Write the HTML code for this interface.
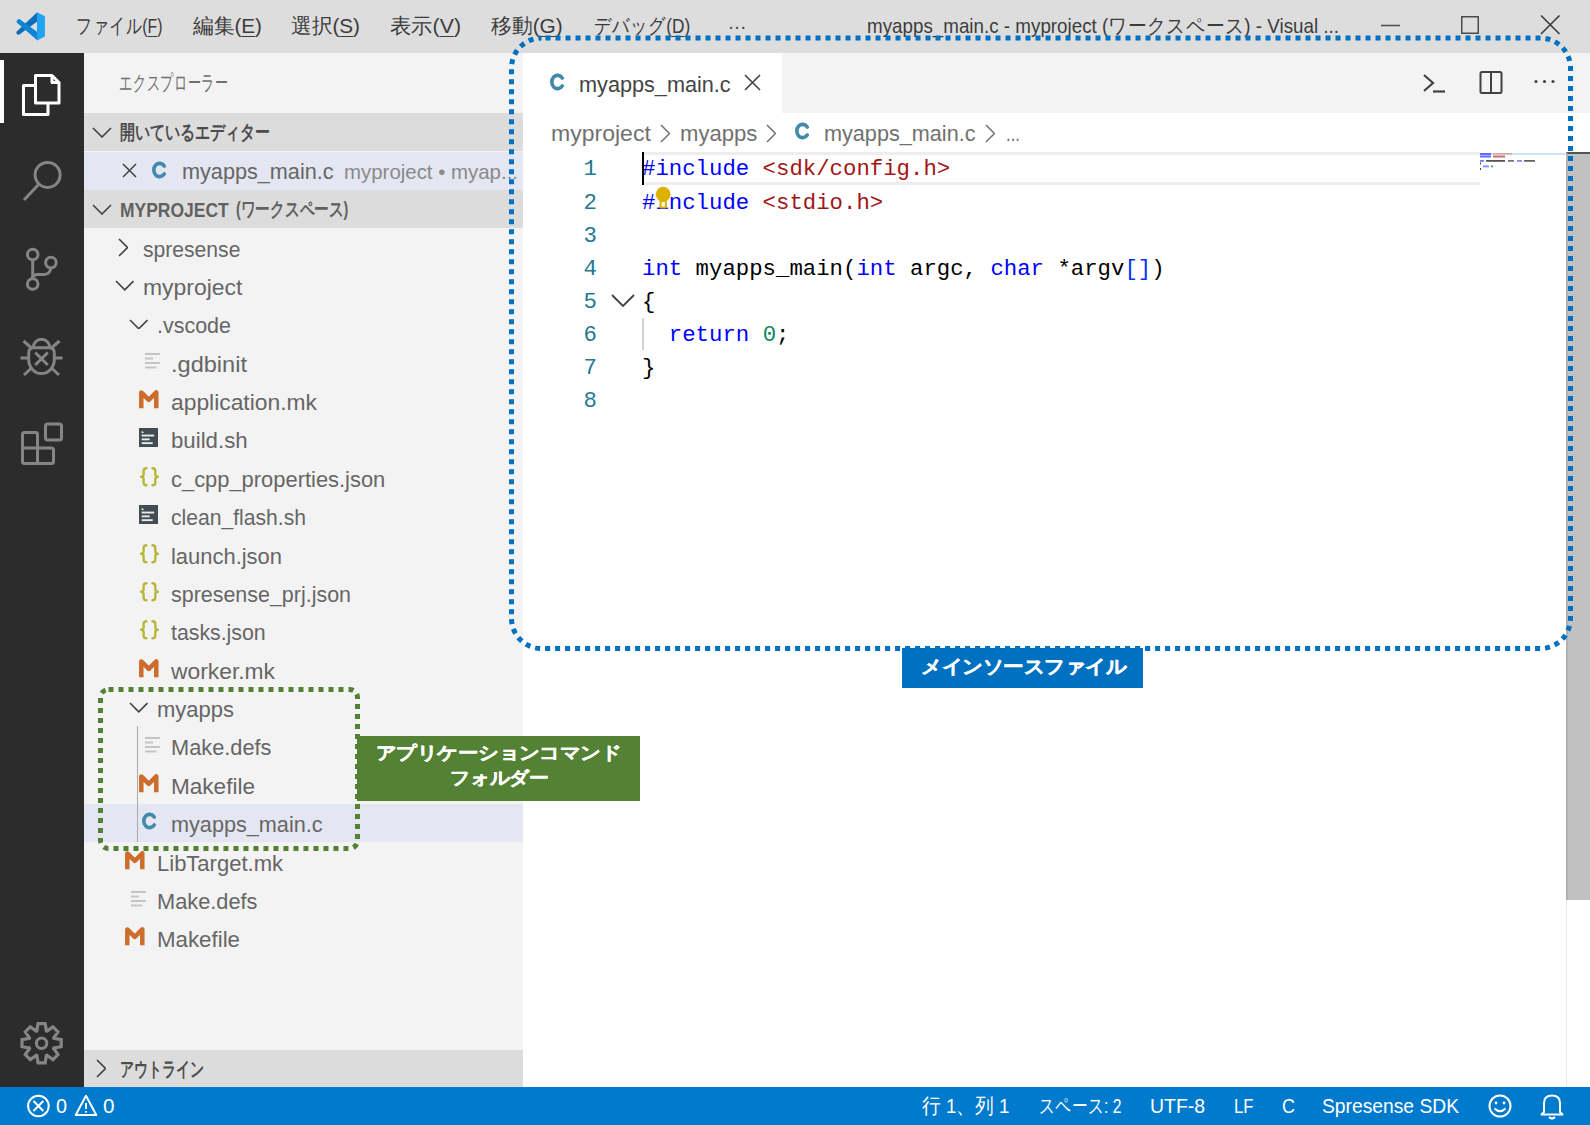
<!DOCTYPE html>
<html><head><meta charset="utf-8"><style>
*{margin:0;padding:0;box-sizing:border-box}
html,body{width:1590px;height:1125px;overflow:hidden;background:#fff;font-family:"Liberation Sans",sans-serif}
.abs{position:absolute}
.t{position:absolute;white-space:nowrap}
.menu{font-size:21px;color:#3c3c3c;line-height:30px}
.menu u{text-decoration:underline;text-underline-offset:3px;text-decoration-thickness:1px}
.hdr{position:absolute;left:84px;width:438.5px;height:38.3px;background:#dcdcdc}
.hdrt{font-size:19.5px;font-weight:bold;color:#616161;line-height:38px}
.row{position:absolute;left:84px;width:438.5px;height:38.27px}
.row.sel{background:#e4e6f1}
.ic{position:absolute}
.lbl{font-size:21.3px;color:#666666;line-height:36px}
.jsonic{font-family:"Liberation Mono",monospace;font-size:21px;font-weight:bold;color:#b7b73b;line-height:26px;letter-spacing:-2px}
.cic{font-size:23px;font-weight:bold;color:#519aba;line-height:26px}
.code{position:absolute;left:642px;font-family:"Liberation Mono",monospace;font-size:22.33px;line-height:33.14px;color:#000;white-space:pre}
.ln{position:absolute;left:560px;width:37px;text-align:right;font-family:"Liberation Mono",monospace;font-size:22.33px;line-height:33.14px;color:#237893}
.kw{color:#0000ff}.str{color:#a31515}.num{color:#09885a}.br{color:#0431fa}
.st{line-height:38px;font-size:21px;color:#fff}
</style></head><body>
<div class="abs" style="left:0;top:0;width:1590px;height:52.5px;background:#dddddd"></div>
<svg class="abs" style="left:10px;top:8px" width="40" height="38" viewBox="10 8 40 38">
  <path d="M37.2 12.3 L38 21 L19.4 34.4 Q18 35.2 17 34 L16.4 33 Q16 32 17 31.2 Z" fill="#0a6ebd"/>
  <path d="M19.4 19 L38 32.6 L37.5 40.6 L17 22.8 Q16 21.8 17 20.6 L17.6 19.8 Q18.4 18.6 19.4 19 Z" fill="#0b85d5"/>
  <path d="M37 12.2 L44.9 16.3 V36.6 L37 40.4 Z" fill="#20a3f0"/>
</svg>
<div class="t menu" style="left:75.5px;top:11px;"><span style="display:inline-block;transform:scaleX(0.7533);transform-origin:0 0">ファイル(<u>F</u>)</span></div>
<div class="t menu" style="left:192.7px;top:11px;"><span style="display:inline-block;transform:scaleX(0.9855);transform-origin:0 0">編集(<u>E</u>)</span></div>
<div class="t menu" style="left:291px;top:11px;"><span style="display:inline-block;transform:scaleX(0.9855);transform-origin:0 0">選択(<u>S</u>)</span></div>
<div class="t menu" style="left:390px;top:11px;"><span style="display:inline-block;transform:scaleX(1.0141);transform-origin:0 0">表示(<u>V</u>)</span></div>
<div class="t menu" style="left:491.3px;top:11px;"><span style="display:inline-block;transform:scaleX(0.9911);transform-origin:0 0">移動(<u>G</u>)</span></div>
<div class="t menu" style="left:593.7px;top:11px;"><span style="display:inline-block;transform:scaleX(0.8219);transform-origin:0 0">デバッグ(<u>D</u>)</span></div>
<div class="t menu" style="left:727.8px;top:11px;"><span style="display:inline-block;transform:scaleX(0.8673);transform-origin:0 0">···</span></div>
<div class="t menu" style="left:867px;top:11px;"><span style="display:inline-block;transform:scaleX(0.8950);transform-origin:0 0">myapps_main.c - myproject (ワークスペース) - Visual ...</span></div>
<svg class="abs" style="left:1375px;top:10px" width="190" height="30" viewBox="1375 10 190 30">
  <path d="M1381 25.5 H1400" stroke="#4a4a4a" stroke-width="1.5"/>
  <rect x="1461.75" y="16.75" width="16.5" height="16.5" fill="none" stroke="#4a4a4a" stroke-width="1.5"/>
  <path d="M1541 15.5 L1559.5 34 M1559.5 15.5 L1541 34" stroke="#3a3a3a" stroke-width="1.6"/>
</svg>
<div class="abs" style="left:0;top:52.5px;width:84px;height:1034.5px;background:#2c2c2c"></div>
<div class="abs" style="left:0;top:60px;width:4px;height:63px;background:#fff"></div>
<svg class="abs" style="left:0;top:52px" width="84" height="1035" viewBox="0 52 84 1035">
 <g fill="none" stroke="#ffffff" stroke-width="3" stroke-linejoin="round">
  <path d="M35.5 75.5 H52 L59 82.5 V103 H35.5 Z"/>
  <path d="M52 75.5 V82.5 H59"/>
  <path d="M35.5 85.5 H23.5 V114.5 H48 V103"/>
 </g>
 <g fill="none" stroke="#858585" stroke-width="3">
  <circle cx="47.6" cy="174.9" r="12.5"/>
  <path d="M38.5 184.5 L24 200"/>
  <circle cx="32.7" cy="254.5" r="5.3"/>
  <circle cx="50.9" cy="262.6" r="5.3"/>
  <circle cx="32.7" cy="284" r="5.3"/>
  <path d="M32.7 259.8 V278.7"/>
  <path d="M50.9 267.9 Q50 274.4 44 274.4 H38 Q33 274.4 32.7 278"/>
  <path d="M33.2 347.8 A8.3 8.6 0 0 1 49.8 347.8"/>
  <path d="M28.7 353 Q28.7 347.8 34 347.8 H49 Q54.3 347.8 54.3 353 V359.5 A12.8 14 0 0 1 28.7 359.5 Z"/>
  <path d="M35.2 352.5 L47.8 365 M47.8 352.5 L35.2 365"/>
  <path d="M20.5 358 H28 M55 358 H62.5"/>
  <path d="M23.5 341 L31 347.5 M59.5 341 L52 347.5"/>
  <path d="M24 375 L31.5 368 M59 375 L51.5 368"/>
  <path d="M24.5 432.5 H35.5 Q37.5 432.5 37.5 434.5 V448 H51.5 Q53.5 448 53.5 450 V461.5 Q53.5 463.5 51.5 463.5 H24.5 Q22.5 463.5 22.5 461.5 V434.5 Q22.5 432.5 24.5 432.5 Z M22.5 448 H37.5 V463.5"/>
  <rect x="45.5" y="424" width="16" height="16" rx="2"/>
  <circle cx="41.6" cy="1043.2" r="5.2"/>
 </g>
 <path fill="none" stroke="#858585" stroke-width="3.2" d="M36.83 1030.89 L38.04 1023.62 L45.16 1023.62 L46.37 1030.89 L46.93 1031.12 L52.92 1026.84 L57.96 1031.88 L53.68 1037.87 L53.91 1038.43 L61.18 1039.64 L61.18 1046.76 L53.91 1047.97 L53.68 1048.53 L57.96 1054.52 L52.92 1059.56 L46.93 1055.28 L46.37 1055.51 L45.16 1062.78 L38.04 1062.78 L36.83 1055.51 L36.27 1055.28 L30.28 1059.56 L25.24 1054.52 L29.52 1048.53 L29.29 1047.97 L22.02 1046.76 L22.02 1039.64 L29.29 1038.43 L29.52 1037.87 L25.24 1031.88 L30.28 1026.84 L36.27 1031.12 Z"/>
</svg>
<div class="abs" style="left:84px;top:52.5px;width:438.5px;height:1034.5px;background:#f3f3f3"></div>
<div class="t" style="left:119px;top:67.5px;font-size:20.5px;color:#6f6f6f;line-height:30px"><span style="display:inline-block;transform:scaleX(0.6264);transform-origin:0 0">エクスプローラー</span></div>
<div class="hdr" style="top:113px"></div>
<svg class="abs" style="left:91.5px;top:126.69999999999999px" width="20" height="11.0" viewBox="-1 -1 20 11.0"><path d="M0 0 L9.0 9.0 L18 0" fill="none" stroke="#424242" stroke-width="1.6"/></svg>
<div class="t hdrt" style="left:120px;top:113px;font-size:19.5px;color:#4d4d4d"><span style="display:inline-block;transform:scaleX(0.7500);transform-origin:0 0">開いているエディター</span></div>
<div class="row sel" style="top:151.6px"></div>
<svg class="abs" style="left:122px;top:163px" width="15" height="15" viewBox="0 0 15 15"><path d="M1 1 L14 14 M14 1 L1 14" stroke="#424242" stroke-width="1.5"/></svg>
<svg class="abs" style="left:149.3px;top:159.9px" width="20" height="20" viewBox="149.3 159.9 20 20"><path d="M164.54 165.90 A5.8 6.65 0 1 0 164.54 173.90" fill="none" stroke="#4289aa" stroke-width="3.6" stroke-linecap="round"/></svg>
<div class="t lbl" style="left:181.7px;top:154px;"><span style="display:inline-block;transform:scaleX(1.0165);transform-origin:0 0">myapps_main.c</span></div>
<div class="t lbl" style="left:344.3px;top:154px;font-size:21px;color:#8a8a8a"><span style="display:inline-block;transform:scaleX(0.9726);transform-origin:0 0">myproject • myap...</span></div>
<div class="hdr" style="top:189.8px"></div>
<svg class="abs" style="left:91.5px;top:203.5px" width="20" height="11.0" viewBox="-1 -1 20 11.0"><path d="M0 0 L9.0 9.0 L18 0" fill="none" stroke="#424242" stroke-width="1.6"/></svg>
<div class="t hdrt" style="left:120px;top:191.3px;font-size:20.3px"><span style="display:inline-block;transform:scaleX(0.8612);transform-origin:0 0">MYPROJECT</span></div>
<div class="t hdrt" style="left:236px;top:190px;"><span style="display:inline-block;transform:scaleX(0.7346);transform-origin:0 0">(ワークスペース)</span></div>
<svg class="abs" style="left:117.5px;top:237.785px" width="10.5" height="19" viewBox="-1 -1 10.5 19"><path d="M0 0 L8.5 8.5 L0 17" fill="none" stroke="#424242" stroke-width="1.6"/></svg>
<div class="t lbl" style="left:143.3px;top:231.6px;"><span style="display:inline-block;transform:scaleX(0.9912);transform-origin:0 0">spresense</span></div>
<svg class="abs" style="left:114.5px;top:280.28px" width="19.5" height="10.75" viewBox="-1 -1 19.5 10.75"><path d="M0 0 L8.75 8.75 L17.5 0" fill="none" stroke="#424242" stroke-width="1.6"/></svg>
<div class="t lbl" style="left:143.3px;top:269.97px;"><span style="display:inline-block;transform:scaleX(1.0768);transform-origin:0 0">myproject</span></div>
<svg class="abs" style="left:128.5px;top:318.65px" width="19.5" height="10.75" viewBox="-1 -1 19.5 10.75"><path d="M0 0 L8.75 8.75 L17.5 0" fill="none" stroke="#424242" stroke-width="1.6"/></svg>
<div class="t lbl" style="left:157.3px;top:308.34px;"><span style="display:inline-block;transform:scaleX(1.0081);transform-origin:0 0">.vscode</span></div>
<svg class="abs" style="left:145.2px;top:353.495px" width="16" height="16" viewBox="0 0 16 16"><g stroke="#c4c6c6" stroke-width="2"><path d="M0 1 H15"/><path d="M0 5.5 H8"/><path d="M0 10 H15"/><path d="M0 14.5 H11.5"/></g></svg>
<div class="t lbl" style="left:171px;top:346.71px;"><span style="display:inline-block;transform:scaleX(1.1065);transform-origin:0 0">.gdbinit</span></div>
<svg class="abs" style="left:139.3px;top:390.315px" width="20" height="19" viewBox="0 0 20 19"><path d="M2.3 18.3 V2.4 L9.8 9.9 L17.3 2.4 V18.3" fill="none" stroke="#cc6d2e" stroke-width="4.5" stroke-linejoin="round"/></svg>
<div class="t lbl" style="left:171px;top:385.08px;"><span style="display:inline-block;transform:scaleX(1.0724);transform-origin:0 0">application.mk</span></div>
<svg class="abs" style="left:139.3px;top:428.135px" width="19" height="19" viewBox="0 0 19 19"><rect x="0" y="0" width="19" height="19" fill="#414d52"/><g fill="#e8eaea"><path d="M2.7 3 L5.2 4.2 L2.7 5.4 Z"/><rect x="2.7" y="6.6" width="12.5" height="1.9"/><rect x="2.7" y="10.4" width="8" height="1.9"/><rect x="2.7" y="14.2" width="11" height="1.9"/></g></svg>
<div class="t lbl" style="left:171px;top:423.45px;"><span style="display:inline-block;transform:scaleX(1.0435);transform-origin:0 0">build.sh</span></div>
<svg class="abs" style="left:139.7px;top:467.00499999999994px" width="19" height="20" viewBox="0 0 19 20"><g fill="none" stroke="#b7b73b" stroke-width="2.4" stroke-linecap="round" stroke-linejoin="round"><path d="M6.4 1.3 Q3.6 1.3 3.6 4 V7.2 Q3.6 9.7 0.9 9.7 Q3.6 9.7 3.6 12.2 V15.4 Q3.6 18.2 6.4 18.2"/><path d="M12.5 1.3 Q15.3 1.3 15.3 4 V7.2 Q15.3 9.7 18 9.7 Q15.3 9.7 15.3 12.2 V15.4 Q15.3 18.2 12.5 18.2"/></g></svg>
<div class="t lbl" style="left:171px;top:461.82px;"><span style="display:inline-block;transform:scaleX(1.0284);transform-origin:0 0">c_cpp_properties.json</span></div>
<svg class="abs" style="left:139.3px;top:504.8749999999999px" width="19" height="19" viewBox="0 0 19 19"><rect x="0" y="0" width="19" height="19" fill="#414d52"/><g fill="#e8eaea"><path d="M2.7 3 L5.2 4.2 L2.7 5.4 Z"/><rect x="2.7" y="6.6" width="12.5" height="1.9"/><rect x="2.7" y="10.4" width="8" height="1.9"/><rect x="2.7" y="14.2" width="11" height="1.9"/></g></svg>
<div class="t lbl" style="left:171px;top:500.19px;"><span style="display:inline-block;transform:scaleX(0.9915);transform-origin:0 0">clean_flash.sh</span></div>
<svg class="abs" style="left:139.7px;top:543.7449999999999px" width="19" height="20" viewBox="0 0 19 20"><g fill="none" stroke="#b7b73b" stroke-width="2.4" stroke-linecap="round" stroke-linejoin="round"><path d="M6.4 1.3 Q3.6 1.3 3.6 4 V7.2 Q3.6 9.7 0.9 9.7 Q3.6 9.7 3.6 12.2 V15.4 Q3.6 18.2 6.4 18.2"/><path d="M12.5 1.3 Q15.3 1.3 15.3 4 V7.2 Q15.3 9.7 18 9.7 Q15.3 9.7 15.3 12.2 V15.4 Q15.3 18.2 12.5 18.2"/></g></svg>
<div class="t lbl" style="left:171px;top:538.56px;"><span style="display:inline-block;transform:scaleX(1.0302);transform-origin:0 0">launch.json</span></div>
<svg class="abs" style="left:139.7px;top:582.1149999999999px" width="19" height="20" viewBox="0 0 19 20"><g fill="none" stroke="#b7b73b" stroke-width="2.4" stroke-linecap="round" stroke-linejoin="round"><path d="M6.4 1.3 Q3.6 1.3 3.6 4 V7.2 Q3.6 9.7 0.9 9.7 Q3.6 9.7 3.6 12.2 V15.4 Q3.6 18.2 6.4 18.2"/><path d="M12.5 1.3 Q15.3 1.3 15.3 4 V7.2 Q15.3 9.7 18 9.7 Q15.3 9.7 15.3 12.2 V15.4 Q15.3 18.2 12.5 18.2"/></g></svg>
<div class="t lbl" style="left:171px;top:576.93px;"><span style="display:inline-block;transform:scaleX(1.0069);transform-origin:0 0">spresense_prj.json</span></div>
<svg class="abs" style="left:139.7px;top:620.4849999999999px" width="19" height="20" viewBox="0 0 19 20"><g fill="none" stroke="#b7b73b" stroke-width="2.4" stroke-linecap="round" stroke-linejoin="round"><path d="M6.4 1.3 Q3.6 1.3 3.6 4 V7.2 Q3.6 9.7 0.9 9.7 Q3.6 9.7 3.6 12.2 V15.4 Q3.6 18.2 6.4 18.2"/><path d="M12.5 1.3 Q15.3 1.3 15.3 4 V7.2 Q15.3 9.7 18 9.7 Q15.3 9.7 15.3 12.2 V15.4 Q15.3 18.2 12.5 18.2"/></g></svg>
<div class="t lbl" style="left:171px;top:615.3px;"><span style="display:inline-block;transform:scaleX(1.0000);transform-origin:0 0">tasks.json</span></div>
<svg class="abs" style="left:139.3px;top:658.905px" width="20" height="19" viewBox="0 0 20 19"><path d="M2.3 18.3 V2.4 L9.8 9.9 L17.3 2.4 V18.3" fill="none" stroke="#cc6d2e" stroke-width="4.5" stroke-linejoin="round"/></svg>
<div class="t lbl" style="left:171px;top:653.67px;"><span style="display:inline-block;transform:scaleX(1.0716);transform-origin:0 0">worker.mk</span></div>
<svg class="abs" style="left:128.5px;top:702.3499999999999px" width="19.5" height="10.75" viewBox="-1 -1 19.5 10.75"><path d="M0 0 L8.75 8.75 L17.5 0" fill="none" stroke="#424242" stroke-width="1.6"/></svg>
<div class="t lbl" style="left:157.3px;top:692.04px;"><span style="display:inline-block;transform:scaleX(1.0325);transform-origin:0 0">myapps</span></div>
<svg class="abs" style="left:145.2px;top:737.1949999999998px" width="16" height="16" viewBox="0 0 16 16"><g stroke="#c4c6c6" stroke-width="2"><path d="M0 1 H15"/><path d="M0 5.5 H8"/><path d="M0 10 H15"/><path d="M0 14.5 H11.5"/></g></svg>
<div class="t lbl" style="left:171px;top:730.41px;"><span style="display:inline-block;transform:scaleX(1.0229);transform-origin:0 0">Make.defs</span></div>
<svg class="abs" style="left:139.3px;top:774.015px" width="20" height="19" viewBox="0 0 20 19"><path d="M2.3 18.3 V2.4 L9.8 9.9 L17.3 2.4 V18.3" fill="none" stroke="#cc6d2e" stroke-width="4.5" stroke-linejoin="round"/></svg>
<div class="t lbl" style="left:171px;top:768.78px;"><span style="display:inline-block;transform:scaleX(1.0591);transform-origin:0 0">Makefile</span></div>
<div class="row sel" style="top:803.65px"></div>
<svg class="abs" style="left:139.2px;top:811.035px" width="20" height="20" viewBox="139.2 811.035 20 20"><path d="M154.44 817.03 A5.8 6.65 0 1 0 154.44 825.03" fill="none" stroke="#4289aa" stroke-width="3.6" stroke-linecap="round"/></svg>
<div class="t lbl" style="left:171px;top:807.15px;"><span style="display:inline-block;transform:scaleX(1.0165);transform-origin:0 0">myapps_main.c</span></div>
<svg class="abs" style="left:125.30000000000001px;top:850.755px" width="20" height="19" viewBox="0 0 20 19"><path d="M2.3 18.3 V2.4 L9.8 9.9 L17.3 2.4 V18.3" fill="none" stroke="#cc6d2e" stroke-width="4.5" stroke-linejoin="round"/></svg>
<div class="t lbl" style="left:157px;top:845.52px;"><span style="display:inline-block;transform:scaleX(1.0334);transform-origin:0 0">LibTarget.mk</span></div>
<svg class="abs" style="left:131.2px;top:890.6749999999998px" width="16" height="16" viewBox="0 0 16 16"><g stroke="#c4c6c6" stroke-width="2"><path d="M0 1 H15"/><path d="M0 5.5 H8"/><path d="M0 10 H15"/><path d="M0 14.5 H11.5"/></g></svg>
<div class="t lbl" style="left:157px;top:883.89px;"><span style="display:inline-block;transform:scaleX(1.0229);transform-origin:0 0">Make.defs</span></div>
<svg class="abs" style="left:125.30000000000001px;top:927.495px" width="20" height="19" viewBox="0 0 20 19"><path d="M2.3 18.3 V2.4 L9.8 9.9 L17.3 2.4 V18.3" fill="none" stroke="#cc6d2e" stroke-width="4.5" stroke-linejoin="round"/></svg>
<div class="t lbl" style="left:157px;top:922.26px;"><span style="display:inline-block;transform:scaleX(1.0465);transform-origin:0 0">Makefile</span></div>
<div class="abs" style="left:137px;top:726px;width:1.2px;height:116px;background:#a9a9a9"></div>
<div class="hdr" style="top:1049.5px"></div>
<svg class="abs" style="left:95.5px;top:1059.0px" width="10.5" height="19" viewBox="-1 -1 10.5 19"><path d="M0 0 L8.5 8.5 L0 17" fill="none" stroke="#424242" stroke-width="1.6"/></svg>
<div class="t hdrt" style="left:119.5px;top:1050px;font-size:19.5px;color:#4d4d4d"><span style="display:inline-block;transform:scaleX(0.7000);transform-origin:0 0">アウトライン</span></div>
<div class="abs" style="left:522.5px;top:52.5px;width:1067.5px;height:60.2px;background:#f3f3f3"></div>
<div class="abs" style="left:522.5px;top:52.5px;width:259px;height:60.2px;background:#fff"></div>
<svg class="abs" style="left:547px;top:72.3px" width="20" height="20" viewBox="547 72.3 20 20"><path d="M562.24 78.30 A5.8 6.65 0 1 0 562.24 86.30" fill="none" stroke="#4289aa" stroke-width="3.6" stroke-linecap="round"/></svg>
<div class="t" style="left:579px;top:67px;font-size:21.3px;color:#444444;line-height:36px"><span style="display:inline-block;transform:scaleX(1.0172);transform-origin:0 0">myapps_main.c</span></div>
<svg class="abs" style="left:744px;top:74px" width="17" height="17" viewBox="0 0 17 17"><path d="M1 1 L16 16 M16 1 L1 16" stroke="#424242" stroke-width="1.6"/></svg>
<svg class="abs" style="left:1418px;top:66px" width="145" height="34" viewBox="1418 66 145 34">
 <path d="M1424 75 L1433 83 L1424 91" fill="none" stroke="#424242" stroke-width="2.2"/>
 <path d="M1433 91.5 H1445" stroke="#424242" stroke-width="2.2"/>
 <rect x="1480.5" y="72" width="21" height="21" rx="1.5" fill="none" stroke="#424242" stroke-width="2"/>
 <path d="M1491 72 V93" stroke="#424242" stroke-width="2"/>
 <circle cx="1536" cy="81.5" r="1.6" fill="#424242"/>
 <circle cx="1544.5" cy="81.5" r="1.6" fill="#424242"/>
 <circle cx="1553" cy="81.5" r="1.6" fill="#424242"/>
</svg>
<div class="t" style="left:551px;top:116px;font-size:21.3px;color:#717171;line-height:36px"><span style="display:inline-block;transform:scaleX(1.0811);transform-origin:0 0">myproject</span></div>
<svg class="abs" style="left:659.5px;top:123.5px" width="10.5" height="19" viewBox="-1 -1 10.5 19"><path d="M0 0 L8.5 8.5 L0 17" fill="none" stroke="#717171" stroke-width="1.5"/></svg>
<div class="t" style="left:679.6px;top:116px;font-size:21.3px;color:#717171;line-height:36px"><span style="display:inline-block;transform:scaleX(1.0378);transform-origin:0 0">myapps</span></div>
<svg class="abs" style="left:765.5px;top:123.5px" width="10.5" height="19" viewBox="-1 -1 10.5 19"><path d="M0 0 L8.5 8.5 L0 17" fill="none" stroke="#717171" stroke-width="1.5"/></svg>
<svg class="abs" style="left:792.1px;top:121.1px" width="20" height="20" viewBox="792.1 121.1 20 20"><path d="M807.34 127.10 A5.8 6.65 0 1 0 807.34 135.10" fill="none" stroke="#4289aa" stroke-width="3.6" stroke-linecap="round"/></svg>
<div class="t" style="left:824px;top:116px;font-size:21.3px;color:#717171;line-height:36px"><span style="display:inline-block;transform:scaleX(1.0158);transform-origin:0 0">myapps_main.c</span></div>
<svg class="abs" style="left:984.5px;top:123.5px" width="10.5" height="19" viewBox="-1 -1 10.5 19"><path d="M0 0 L8.5 8.5 L0 17" fill="none" stroke="#717171" stroke-width="1.5"/></svg>
<div class="t" style="left:1005.5px;top:116px;font-size:21.3px;color:#717171;line-height:36px"><span style="display:inline-block;transform:scaleX(0.7880);transform-origin:0 0">...</span></div>
<div class="abs" style="left:642px;top:152px;width:838px;height:33.2px;border-top:3.6px solid #eeeeee;border-bottom:3.6px solid #eeeeee"></div>
<div class="ln" style="top:153.40px">1</div>
<div class="code" style="top:153.40px"><span class="kw">#include</span> <span class="str">&lt;sdk/config.h&gt;</span></div>
<div class="ln" style="top:186.54px">2</div>
<div class="code" style="top:186.54px"><span class="kw">#include</span> <span class="str">&lt;stdio.h&gt;</span></div>
<div class="ln" style="top:219.68px">3</div>
<div class="code" style="top:219.68px"></div>
<div class="ln" style="top:252.82px">4</div>
<div class="code" style="top:252.82px"><span class="kw">int</span> myapps_main(<span class="kw">int</span> argc, <span class="kw">char</span> *argv<span class="br">[]</span>)</div>
<div class="ln" style="top:285.96px">5</div>
<div class="code" style="top:285.96px">{</div>
<div class="ln" style="top:319.10px">6</div>
<div class="code" style="top:319.10px">  <span class="kw">return</span> <span class="num">0</span>;</div>
<div class="ln" style="top:352.24px">7</div>
<div class="code" style="top:352.24px">}</div>
<div class="ln" style="top:385.38px">8</div>
<div class="code" style="top:385.38px"></div>
<div class="abs" style="left:642px;top:152px;width:2px;height:33px;background:#000"></div>
<svg class="abs" style="left:653px;top:185px" width="20" height="26" viewBox="0 0 20 26"><circle cx="10.2" cy="9.2" r="7.4" fill="#ddb100"/><rect x="6.5" y="13" width="7.4" height="10.5" rx="1.5" fill="#ddb100"/><rect x="8.6" y="17" width="3.2" height="4.5" fill="#fff"/></svg>
<svg class="abs" style="left:611px;top:293.5px" width="24" height="13.0" viewBox="-1 -1 24 13.0"><path d="M0 0 L11.0 11.0 L22 0" fill="none" stroke="#424242" stroke-width="1.8"/></svg>
<div class="abs" style="left:642.3px;top:318px;width:1.4px;height:32px;background:#d3d3d3"></div>
<svg class="abs" style="left:1480px;top:150px" width="86" height="30" viewBox="0 0 86 30">
<rect x="0" y="3" width="86" height="2" fill="#cfe3fb"/>
<rect x="0" y="3" width="11" height="2" fill="#5b6cff"/><rect x="13" y="3" width="19" height="1.5" fill="#d7a3a3"/>
<rect x="0" y="5.5" width="11" height="2" fill="#5b6cff"/><rect x="13" y="5.5" width="12" height="2" fill="#cc6b6b"/>
<rect x="0" y="10" width="4" height="1.8" fill="#6d7dff"/><rect x="6" y="10" width="19" height="1.8" fill="#555"/><rect x="28" y="10" width="6" height="1.8" fill="#777"/><rect x="37" y="10" width="5" height="1.8" fill="#7d8bff"/><rect x="44" y="10" width="11" height="1.8" fill="#666"/>
<rect x="0" y="12.5" width="1" height="2" fill="#444"/>
<rect x="3" y="15.5" width="6" height="1.8" fill="#7d8bff"/><rect x="11" y="15.5" width="2" height="1.8" fill="#44aa66"/>
<rect x="0" y="18" width="1" height="2" fill="#444"/>
</svg>
<div class="abs" style="left:1566px;top:152px;width:24px;height:935px;border-left:1.5px solid #e8e8e8"></div>
<div class="abs" style="left:1566px;top:152px;width:24px;height:748px;background:#c1c1c1;border-left:2px solid #b2b2b2;border-top:2px solid #555"></div>
<div class="abs" style="left:0;top:1087px;width:1590px;height:38px;background:#007acc"></div>
<svg class="abs" style="left:26px;top:1093px" width="92" height="26" viewBox="26 1093 92 26">
 <circle cx="38.4" cy="1106" r="10.3" fill="none" stroke="#fff" stroke-width="2"/>
 <path d="M33.5 1101 L43.3 1111 M43.3 1101 L33.5 1111" stroke="#fff" stroke-width="2"/>
 <path d="M86 1095.8 L96.3 1115 H75.7 Z" fill="none" stroke="#fff" stroke-width="2" stroke-linejoin="round"/>
 <path d="M86 1103 V1109" stroke="#fff" stroke-width="2"/><circle cx="86" cy="1111.8" r="1.1" fill="#fff"/>
</svg>
<div class="t st" style="left:55.5px;top:1087px;"><span style="display:inline-block;transform:scaleX(0.9412);transform-origin:0 0">0</span></div>
<div class="t st" style="left:102.5px;top:1087px;"><span style="display:inline-block;transform:scaleX(0.9840);transform-origin:0 0">0</span></div>
<div class="t st" style="left:922px;top:1087px;"><span style="display:inline-block;transform:scaleX(0.8926);transform-origin:0 0">行 1、列 1</span></div>
<div class="t st" style="left:1038.5px;top:1087px;"><span style="display:inline-block;transform:scaleX(0.7476);transform-origin:0 0">スペース: 2</span></div>
<div class="t st" style="left:1150px;top:1087px;"><span style="display:inline-block;transform:scaleX(0.9244);transform-origin:0 0">UTF-8</span></div>
<div class="t st" style="left:1233.5px;top:1087px;"><span style="display:inline-block;transform:scaleX(0.7954);transform-origin:0 0">LF</span></div>
<div class="t st" style="left:1281.5px;top:1087px;"><span style="display:inline-block;transform:scaleX(0.8568);transform-origin:0 0">C</span></div>
<div class="t st" style="left:1322px;top:1087px;"><span style="display:inline-block;transform:scaleX(0.9169);transform-origin:0 0">Spresense SDK</span></div>
<svg class="abs" style="left:1486px;top:1093px" width="80" height="28" viewBox="1486 1093 80 28">
 <circle cx="1500" cy="1106" r="10.5" fill="none" stroke="#fff" stroke-width="2"/>
 <circle cx="1496" cy="1103" r="1.4" fill="#fff"/><circle cx="1504" cy="1103" r="1.4" fill="#fff"/>
 <path d="M1494.5 1108.5 Q1500 1114 1505.5 1108.5" fill="none" stroke="#fff" stroke-width="2"/>
 <path d="M1544 1112 V1103 Q1544 1095.5 1552 1095.5 Q1560 1095.5 1560 1103 V1112 L1562.5 1114.5 H1541.5 Z" fill="none" stroke="#fff" stroke-width="2" stroke-linejoin="round"/>
 <path d="M1549 1117 Q1552 1120 1555 1117" fill="none" stroke="#fff" stroke-width="2"/>
</svg>
<svg class="abs" style="left:0;top:0" width="1590" height="1125" viewBox="0 0 1590 1125">
 <rect x="511.5" y="38" width="1059" height="610.5" rx="30" ry="30" fill="none" stroke="#0070c0" stroke-width="5" stroke-dasharray="5 5" stroke-dashoffset="6"/>
 <rect x="100.5" y="689.5" width="257" height="159" rx="8" ry="8" fill="none" stroke="#548235" stroke-width="5" stroke-dasharray="5 5"/>
</svg>
<div class="abs" style="left:902px;top:648px;width:241px;height:40px;background:#0070c0"></div>
<div class="t" style="left:920.5px;top:652px;color:#fff;font-weight:bold;font-size:19px;line-height:30px;-webkit-text-stroke:0.35px #fff"><span style="display:inline-block;transform:scaleX(1.0816);transform-origin:0 0">メインソースファイル</span></div>
<div class="abs" style="left:357px;top:736px;width:283px;height:64.5px;background:#548235"></div>
<div class="t" style="left:376px;top:741px;color:#fff;font-weight:bold;font-size:18px;line-height:25px;-webkit-text-stroke:0.35px #fff"><span style="display:inline-block;transform:scaleX(1.1343);transform-origin:0 0">アプリケーションコマンド</span></div>
<div class="t" style="left:450px;top:766px;color:#fff;font-weight:bold;font-size:18px;line-height:25px;-webkit-text-stroke:0.35px #fff"><span style="display:inline-block;transform:scaleX(1.1000);transform-origin:0 0">フォルダー</span></div>
</body></html>
